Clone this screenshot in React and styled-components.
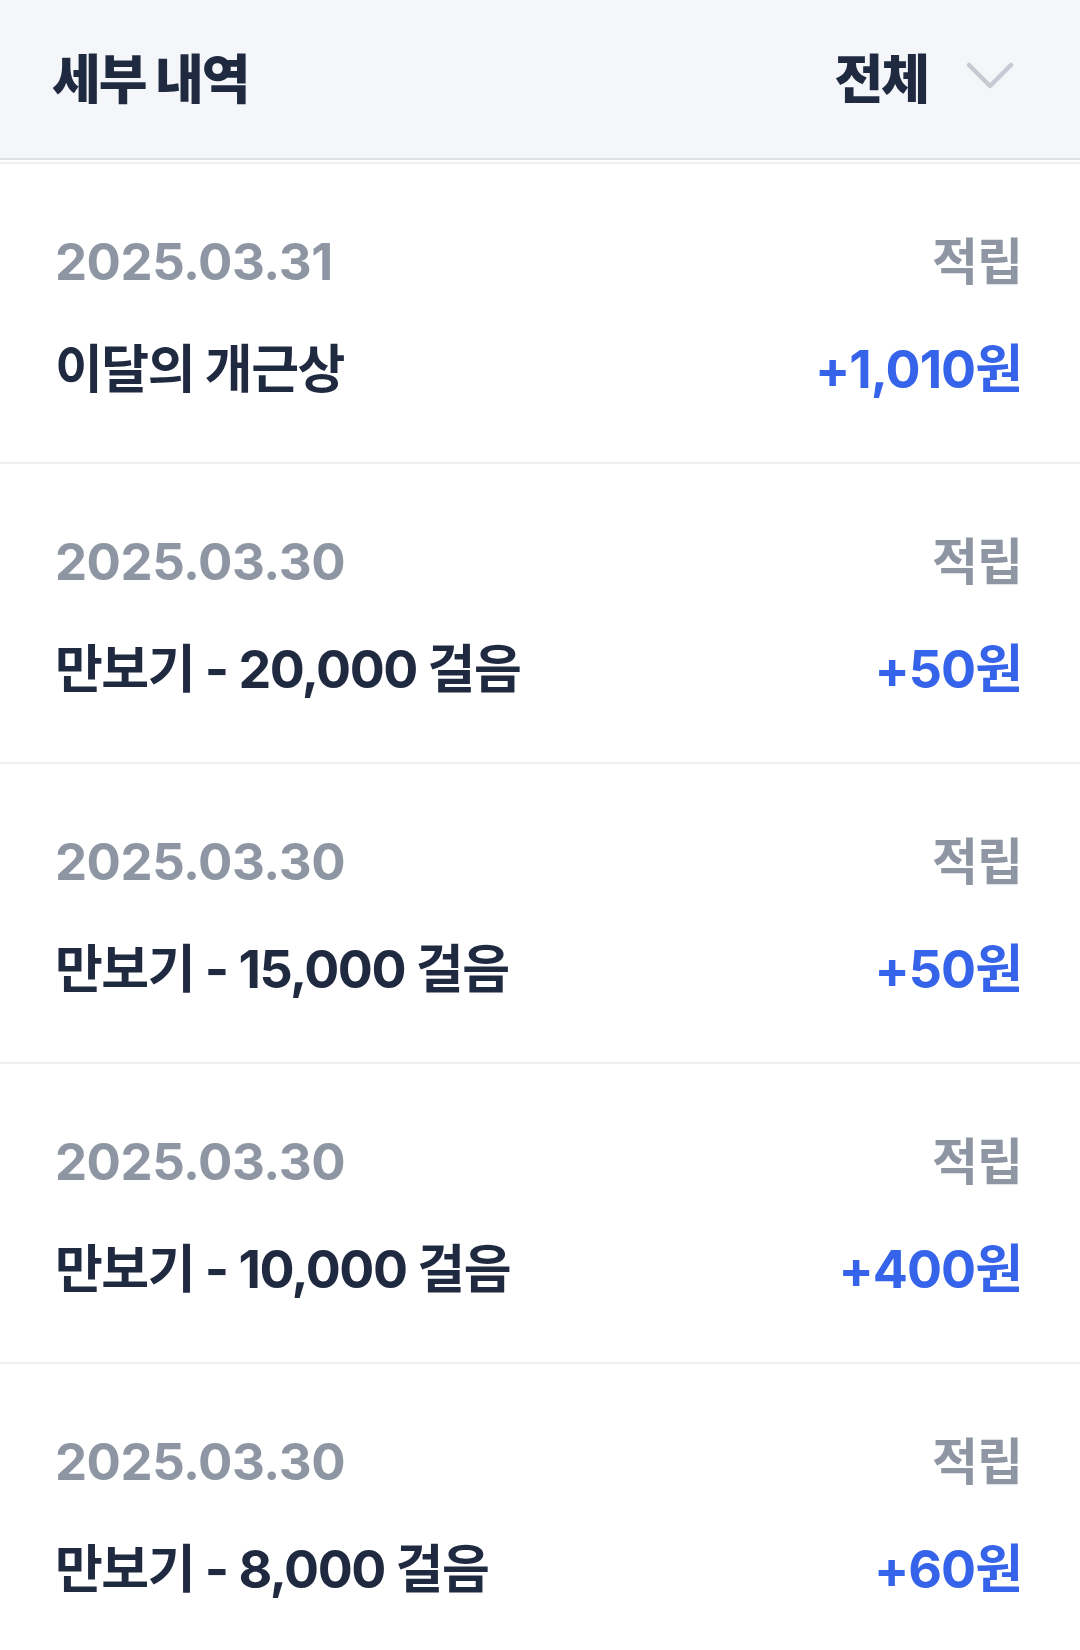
import React from "react";
import styled, { createGlobalStyle } from "styled-components";

const GlobalStyle = createGlobalStyle`
  body {
    margin: 0;
    background: #ffffff;
    font-family: "Inter", "Noto Sans CJK KR", sans-serif;
  }
`;

const Page = styled.div`
  width: 1080px;
  min-height: 1650px;
  background: #ffffff;
`;

const Header = styled.header`
  height: 160px;
  box-sizing: border-box;
  padding: 0 66px 6px 52px;
  display: flex;
  align-items: center;
  justify-content: space-between;
  background: #f4f6f9;
  border-bottom: 2px solid #dfe2e6;
`;

const Title = styled.h1`
  margin: 0;
  font-size: 53px;
  font-weight: 800;
  letter-spacing: -2px;
  color: #1f2940;
`;

const Filter = styled.button`
  display: flex;
  align-items: center;
  gap: 38px;
  padding: 0;
  border: none;
  background: none;
  font-family: inherit;
  font-size: 53px;
  font-weight: 800;
  letter-spacing: -2px;
  color: #1f2940;
  cursor: pointer;
`;

const List = styled.ul`
  list-style: none;
  margin: 2px 0 0;
  padding: 0;
  border-top: 2px solid #eef0f2;
`;

const Item = styled.li`
  height: 300px;
  box-sizing: border-box;
  padding: 58px 58px 0 55px;
  border-bottom: 2px solid #eeeff2;
`;

const Line = styled.div`
  display: flex;
  justify-content: space-between;
  align-items: baseline;
  height: ${(p) => p.h}px;
`;

const DateText = styled.span`
  font-size: 51px;
  font-weight: 700;
  letter-spacing: -0.5px;
  color: #8f96a3;
`;

const Kind = styled.span`
  font-size: 50px;
  font-weight: 700;
  letter-spacing: -1px;
  color: #8f96a3;
`;

const Name = styled.span`
  font-size: 52px;
  font-weight: 700;
  letter-spacing: -1.5px;
  color: #1f2940;
`;

const Amount = styled.span`
  font-size: 52px;
  font-weight: 700;
  letter-spacing: -1px;
  color: #3563e9;
`;

const Chevron = () => (
  <svg width="48" height="28" viewBox="0 0 48 28" fill="none">
    <path
      d="M3 3 L24 24 L45 3"
      stroke="#c6cad2"
      strokeWidth="4.5"
      strokeLinecap="round"
      strokeLinejoin="round"
    />
  </svg>
);

const items = [
  { date: "2025.03.31", name: "이달의 개근상", amount: "+1,010원" },
  { date: "2025.03.30", name: "만보기 - 20,000 걸음", amount: "+50원" },
  { date: "2025.03.30", name: "만보기 - 15,000 걸음", amount: "+50원" },
  { date: "2025.03.30", name: "만보기 - 10,000 걸음", amount: "+400원" },
  { date: "2025.03.30", name: "만보기 - 8,000 걸음", amount: "+60원" },
];

export default function App() {
  return (
    <Page>
      <GlobalStyle />
      <Header>
        <Title>세부 내역</Title>
        <Filter>
          전체
          <Chevron />
        </Filter>
      </Header>
      <List>
        {items.map((it, i) => (
          <Item key={i}>
            <Line h={106}>
              <DateText>{it.date}</DateText>
              <Kind>적립</Kind>
            </Line>
            <Line h={60}>
              <Name>{it.name}</Name>
              <Amount>{it.amount}</Amount>
            </Line>
          </Item>
        ))}
      </List>
    </Page>
  );
}
